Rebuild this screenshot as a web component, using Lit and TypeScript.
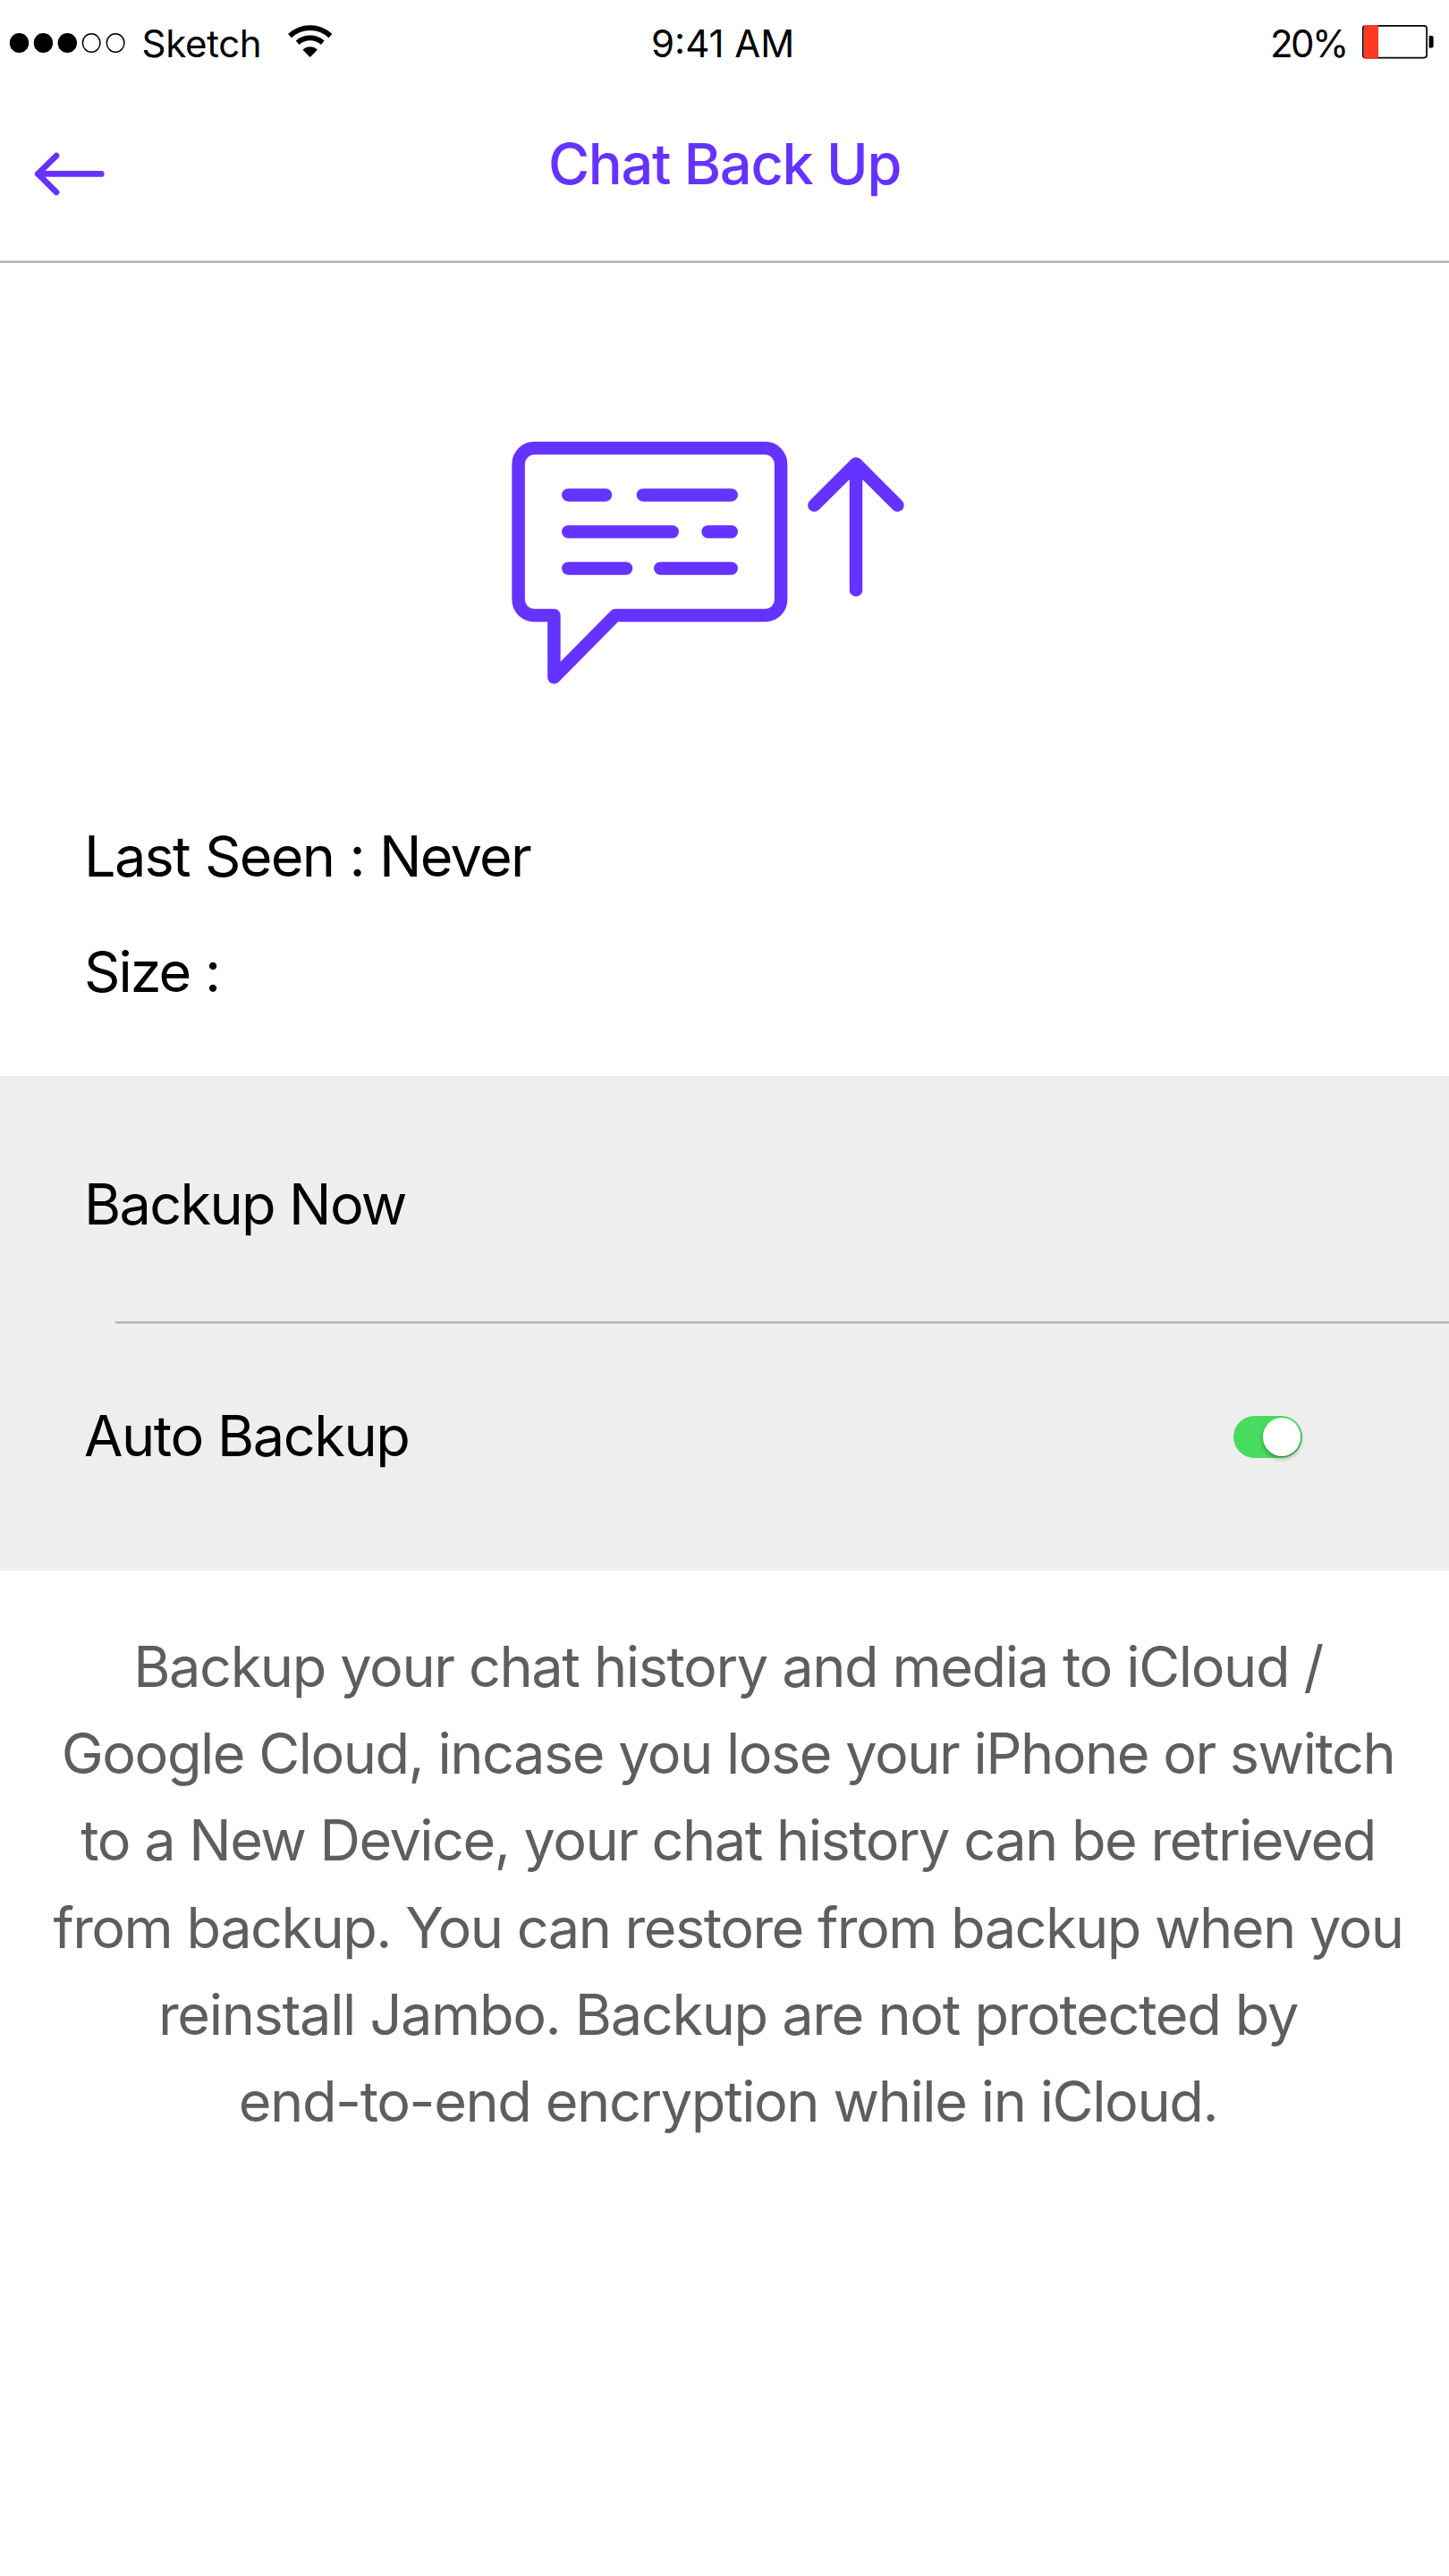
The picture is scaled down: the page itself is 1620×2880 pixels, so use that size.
import { LitElement, html, css } from "lit";
import { customElement, state } from "lit/decorators.js";

@customElement("status-bar")
export class StatusBar extends LitElement {
  static styles = css`
    :host {
      display: grid;
      grid-template-columns: 728px 1fr auto;
      align-items: center;
      height: 97px;
      font-size: 42px;
      line-height: 51px;
      color: #000;
      white-space: nowrap;
    }
    .side {
      display: flex;
      align-items: center;
    }
    svg {
      display: block;
      flex: none;
    }
    .carrier {
      width: 161.5px;
      margin-left: 8.5px;
      letter-spacing: -0.3px;
    }
    .percent {
      width: 100px;
      letter-spacing: -2.5px;
    }
  `;

  render() {
    return html`
      <div class="side">
        <svg width="150" height="97" viewBox="0 0 150 97">
          <ellipse cx="21.5" cy="48" rx="10.7" ry="11.1" />
          <ellipse cx="48.4" cy="48" rx="10.7" ry="11.1" />
          <ellipse cx="75.3" cy="48" rx="10.7" ry="11.1" />
          <g fill="none" stroke="#000" stroke-width="1.5">
            <ellipse cx="102.2" cy="48" rx="9.8" ry="10.3" />
            <ellipse cx="129.1" cy="48" rx="9.8" ry="10.3" />
          </g>
        </svg>
        <span class="carrier">Sketch</span>
        <svg width="54" height="97" viewBox="320 0 54 97">
          <g fill="none" stroke="#000" stroke-width="5.8">
            <path d="M324 40.1A33 33 0 0 1 369.4 40.1" />
            <path d="M332.65 47.7A21.5 21.5 0 0 1 360.75 47.7" />
          </g>
          <path d="M346.7 64L338.5 55.7A11.7 11.7 0 0 1 354.9 55.7Z" />
        </svg>
      </div>
      <span>9:41 AM</span>
      <div class="side">
        <span class="percent">20%</span>
        <svg width="100" height="97" viewBox="1520 0 100 97">
          <rect x="1523.8" y="28.9" width="71.3" height="35.7" rx="3" fill="#fff" stroke="#000" stroke-width="1.7" />
          <rect x="1524.8" y="28" width="16.2" height="37.5" fill="#ff3823" />
          <path d="M1597.6 40H1600.6A2 2 0 0 1 1602.6 42V51.6A2 2 0 0 1 1600.6 53.6H1597.6Z" />
        </svg>
      </div>
    `;
  }
}

@customElement("toggle-switch")
export class ToggleSwitch extends LitElement {
  static styles = css`
    :host {
      display: flex;
      justify-content: flex-end;
      align-items: center;
      box-sizing: border-box;
      width: 77px;
      height: 47px;
      padding-right: 2px;
      border-radius: 24px;
      background: #47dc5f;
    }
    .knob {
      width: 42.4px;
      height: 42.4px;
      border-radius: 50%;
      background: #fff;
      box-shadow: 0 3px 5px rgba(0, 0, 0, 0.28), 0 1px 1px rgba(0, 0, 0, 0.12);
    }
  `;

  render() {
    return html`<div class="knob"></div>`;
  }
}

@customElement("app-root")
export class AppRoot extends LitElement {
  @state() private lastSeen = "Never";

  static styles = css`
    :host {
      display: block;
      width: 1620px;
      height: 2880px;
      overflow: hidden;
      background: #fff;
      color: #000;
      font-family: Inter, "Liberation Sans", sans-serif;
      font-size: 63px;
      line-height: 76px;
      white-space: nowrap;
    }
    svg {
      display: block;
    }
    .purple {
      fill: none;
      stroke: #6533ff;
      stroke-linecap: round;
      stroke-linejoin: round;
    }
    .header {
      display: grid;
      grid-template-columns: 160px 1fr 160px;
      align-items: start;
      box-sizing: border-box;
      height: 194px;
      padding-top: 48px;
    }
    .back {
      margin-top: 19px;
    }
    .title {
      margin: 0;
      font-size: 63px;
      font-weight: 500;
      text-align: center;
      letter-spacing: -1.25px;
      color: #6533ff;
    }
    .rule {
      height: 3px;
      background: linear-gradient(#dedede 33.3%, #a9a9a9 33.3% 66.6%, #bcbcbc 66.6%);
    }
    .hero {
      padding: 196px 0 0 570px;
    }
    .info {
      display: flex;
      flex-direction: column;
      gap: 53px;
      padding: 153px 0 79px 94px;
    }
    .seen {
      letter-spacing: -1.74px;
      word-spacing: 1.2px;
    }
    .size {
      letter-spacing: -2px;
      word-spacing: 1px;
    }
    .settings {
      background: #eee;
    }
    .row {
      display: flex;
      justify-content: space-between;
      align-items: flex-start;
      box-sizing: border-box;
      padding-right: 164px;
      padding-left: 94px;
    }
    .now {
      height: 274px;
      padding-top: 105px;
      letter-spacing: -1.66px;
    }
    .auto {
      height: 276px;
      padding-top: 87px;
      letter-spacing: -1.44px;
    }
    toggle-switch {
      margin-top: 16px;
    }
    .divider {
      height: 3px;
      margin-left: 129px;
      background: linear-gradient(#c9c9c9 33.3%, #a9a9a9 33.3% 66.6%, #cacaca 66.6%);
    }
    .note {
      margin: 0;
      padding: 59px 0 0 8px;
      color: #5e5e5e;
      line-height: 97.2px;
      text-align: center;
    }
    .line {
      display: block;
    }
  `;

  private note: [string, number][] = [
    ["Backup your chat history and media to iCloud /", -1.39],
    ["Google Cloud, incase you lose your iPhone or switch", -1.5],
    ["to a New Device, your chat history can be retrieved", -1.52],
    ["from backup. You can restore from backup when you", -1.52],
    ["reinstall Jambo. Backup are not protected by", -1.33],
    ["end-to-end encryption while in iCloud.", -1.41],
  ];

  render() {
    return html`
      <status-bar></status-bar>
      <header class="header">
        <svg class="back purple" width="160" height="60" viewBox="0 164 160 60" stroke-width="6.8">
          <path d="M113.2 194.4H42.4M63 174.1L42.4 194.4L63 214.8" />
        </svg>
        <h1 class="title">Chat Back Up</h1>
      </header>
      <div class="rule"></div>

      <div class="hero">
        <svg class="purple" width="444" height="276" viewBox="570 490 444 276" stroke-width="14.5">
          <path
            d="M619.4 688H597.2A17.6 17.6 0 0 1 579.6 670.4V518.7A17.6 17.6 0 0 1 597.2 501.1H855.5A17.6 17.6 0 0 1 873.1 518.7V670.4A17.6 17.6 0 0 1 855.5 688H688L619.4 757.3Z"
          />
          <path d="M635.3 553.4H677M718.9 553.4H817.7M635.3 594.5H751.7M791.6 594.5H817.7M635.3 635.5H700M738.3 635.5H817.7" />
          <path d="M957 659.7V518.5M910.4 564.9L957 518.5L1003.4 564.9" />
        </svg>
      </div>

      <div class="info">
        <div class="seen">Last Seen : ${this.lastSeen}</div>
        <div class="size">Size :</div>
      </div>

      <section class="settings">
        <div class="row now"><span>Backup Now</span></div>
        <div class="divider"></div>
        <div class="row auto">
          <span>Auto Backup</span>
          <toggle-switch></toggle-switch>
        </div>
      </section>

      <p class="note">
        ${this.note.map(([text, spacing]) => html`<span class="line" style="letter-spacing:${spacing}px">${text}</span>`)}
      </p>
    `;
  }
}
